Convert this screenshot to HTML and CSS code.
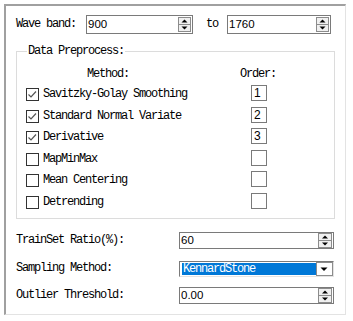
FILE: index.html
```html
<!DOCTYPE html>
<html lang="en">
<head>
  <meta charset="UTF-8">
  <title>Preprocess Settings</title>
  <link rel="stylesheet" href="styles.css">
</head>
<body>
  <div class="panel">
    <!-- Wave band -->
    <div class="wave">
      <span class="wave-label">Wave band:</span>
      <div class="spin spin-from">
        <span class="value">900</span>
        <svg class="spin-btn" width="13" height="15" viewBox="0 0 13 15"><rect x="0.5" y="0.5" width="12" height="14" fill="#f0f0f0" stroke="#8c8c8c"/><line x1="1" y1="7.5" x2="12" y2="7.5" stroke="#8c8c8c"/><path d="M3.5 5.5h6L6.5 2.5z"/><path d="M3.5 9.5h6l-3 3z"/></svg>
      </div>
      <span class="to">to</span>
      <div class="spin spin-to">
        <span class="value">1760</span>
        <svg class="spin-btn" width="13" height="15" viewBox="0 0 13 15"><rect x="0.5" y="0.5" width="12" height="14" fill="#f0f0f0" stroke="#8c8c8c"/><line x1="1" y1="7.5" x2="12" y2="7.5" stroke="#8c8c8c"/><path d="M3.5 5.5h6L6.5 2.5z"/><path d="M3.5 9.5h6l-3 3z"/></svg>
      </div>
    </div>

    <!-- Data Preprocess -->
    <div class="group">
      <div class="group-title">Data Preprocess:</div>
      <div class="head">
        <span class="head-method">Method:</span>
        <span class="head-order">Order:</span>
      </div>
      <div class="method">
        <svg class="check" width="13" height="13" viewBox="0 0 13 13"><rect x="0.5" y="0.5" width="12" height="12" fill="#fff" stroke="#333"/><path d="M2.5 6.5l2.5 2.5 5-5.5" fill="none" stroke="#555" stroke-width="1.2"/></svg>
        <span class="method-name">Savitzky-Golay Smoothing</span>
        <span class="order">1</span>
      </div>
      <div class="method">
        <svg class="check" width="13" height="13" viewBox="0 0 13 13"><rect x="0.5" y="0.5" width="12" height="12" fill="#fff" stroke="#333"/><path d="M2.5 6.5l2.5 2.5 5-5.5" fill="none" stroke="#555" stroke-width="1.2"/></svg>
        <span class="method-name">Standard Normal Variate</span>
        <span class="order">2</span>
      </div>
      <div class="method">
        <svg class="check" width="13" height="13" viewBox="0 0 13 13"><rect x="0.5" y="0.5" width="12" height="12" fill="#fff" stroke="#333"/><path d="M2.5 6.5l2.5 2.5 5-5.5" fill="none" stroke="#555" stroke-width="1.2"/></svg>
        <span class="method-name">Derivative</span>
        <span class="order">3</span>
      </div>
      <div class="method">
        <svg class="check" width="13" height="13" viewBox="0 0 13 13"><rect x="0.5" y="0.5" width="12" height="12" fill="#fff" stroke="#333"/></svg>
        <span class="method-name">MapMinMax</span>
        <span class="order"></span>
      </div>
      <div class="method">
        <svg class="check" width="13" height="13" viewBox="0 0 13 13"><rect x="0.5" y="0.5" width="12" height="12" fill="#fff" stroke="#333"/></svg>
        <span class="method-name">Mean Centering</span>
        <span class="order"></span>
      </div>
      <div class="method">
        <svg class="check" width="13" height="13" viewBox="0 0 13 13"><rect x="0.5" y="0.5" width="12" height="12" fill="#fff" stroke="#333"/></svg>
        <span class="method-name">Detrending</span>
        <span class="order"></span>
      </div>
    </div>

    <!-- Sampling -->
    <div class="field field-first">
      <span class="field-label">TrainSet Ratio(%):</span>
      <div class="spin spin-field">
        <span class="value">60</span>
        <svg class="spin-btn" width="14" height="15" viewBox="0 0 14 15"><rect x="0.5" y="0.5" width="13" height="14" fill="#f0f0f0" stroke="#8c8c8c"/><line x1="1" y1="7.5" x2="13" y2="7.5" stroke="#8c8c8c"/><path d="M4 5.5h6L7 2.5z"/><path d="M4 9.5h6l-3 3z"/></svg>
      </div>
    </div>
    <div class="field">
      <span class="field-label">Sampling Method:</span>
      <div class="combo">
        <span class="combo-text">KennardStone</span>
        <svg class="combo-btn" width="17" height="14" viewBox="0 0 17 14"><rect x="0.5" y="0.5" width="16" height="13" fill="#fff" stroke="#8c8c8c"/><path d="M4.5 5.5h7l-3.5 3.5z"/></svg>
      </div>
    </div>
    <div class="field">
      <span class="field-label">Outlier Threshold:</span>
      <div class="spin spin-field">
        <span class="value">0.00</span>
        <svg class="spin-btn" width="14" height="15" viewBox="0 0 14 15"><rect x="0.5" y="0.5" width="13" height="14" fill="#f0f0f0" stroke="#8c8c8c"/><line x1="1" y1="7.5" x2="13" y2="7.5" stroke="#8c8c8c"/><path d="M4 5.5h6L7 2.5z"/><path d="M4 9.5h6l-3 3z"/></svg>
      </div>
    </div>
  </div>
</body>
</html>
```

FILE: styles.css
```css
/* Global */
body {
  margin: 0;
  background: #fff;
  color: #000;
  font-family: "Liberation Mono", "DejaVu Sans Mono", monospace;
  font-size: 12px;
  letter-spacing: -1.2px;
  line-height: 13px;
}

.panel {
  box-sizing: border-box;
  width: 342px;
  height: 311px;
  margin: 4px 0 0 4px;
  padding: 9px 0 0 10px;
  border-top: 2px solid #a0a0a0;
  border-left: 2px solid #a0a0a0;
  border-right: 1px solid #e3e3e3;
  border-bottom: 1px solid #e3e3e3;
}

/* Spin boxes */
.spin {
  box-sizing: border-box;
  display: flex;
  align-items: center;
  justify-content: space-between;
  border: 1px solid #7a7a7a;
  background: #fff;
  padding: 0 1px 0 1px;
}

.spin .value {
  font-family: "Liberation Sans", Arial, sans-serif;
  font-size: 11.5px;
  letter-spacing: 0;
}

.spin-btn {
  display: block;
  flex: none;
}

/* Wave band row */
.wave {
  display: flex;
  align-items: center;
  height: 19px;
}

.wave-label {
  width: 70px;
}

.spin-from {
  width: 107px;
  height: 19px;
}

.to {
  margin: 0 9px 0 13px;
}

.spin-to {
  width: 104px;
  height: 19px;
}

/* Group box */
.group {
  box-sizing: border-box;
  width: 319px;
  height: 168px;
  margin-top: 17px;
  border: 1px solid #dcdcdc;
  padding-left: 9px;
}

.group-title {
  width: fit-content;
  margin: -7px 0 0 1px;
  padding: 0 1px;
  background: #fff;
}

.head {
  display: flex;
  height: 14px;
  margin-top: 9px;
  margin-bottom: 3px;
  align-items: center;
}

.head-method {
  margin-left: 61px;
  width: 153px;
}

.method {
  display: flex;
  align-items: center;
  height: 21.5px;
}

.check {
  display: block;
  flex: none;
  margin-right: 4px;
}

.method-name {
  width: 208px;
}

.order {
  box-sizing: border-box;
  width: 16px;
  height: 16px;
  margin-top: -3px;
  border: 1px solid #7a7a7a;
  padding-left: 2px;
  font-family: "Liberation Sans", Arial, sans-serif;
  font-size: 12px;
  letter-spacing: 0;
  line-height: 14px;
}

/* Sampling fields */
.field {
  display: flex;
  align-items: center;
  height: 17px;
  margin-top: 11px;
}

.field-first {
  margin-top: 13px;
}

.field + .field + .field {
  margin-top: 10px;
}

.field-label {
  width: 163px;
}

.spin-field {
  width: 155px;
  height: 17px;
}

.combo {
  box-sizing: border-box;
  display: flex;
  align-items: center;
  width: 155px;
  height: 16px;
  border-top: 1px solid #7a7a7a;
  border-left: 1px solid #7a7a7a;
  border-right: 1px solid #e3e3e3;
  border-bottom: 1px solid #e3e3e3;
  padding-left: 2px;
}

.combo-text {
  flex: 1;
  height: 12px;
  padding-left: 1px;
  background: #0078d7;
  color: #fff;
  line-height: 12px;
}

.combo-btn {
  display: block;
  flex: none;
}
```
